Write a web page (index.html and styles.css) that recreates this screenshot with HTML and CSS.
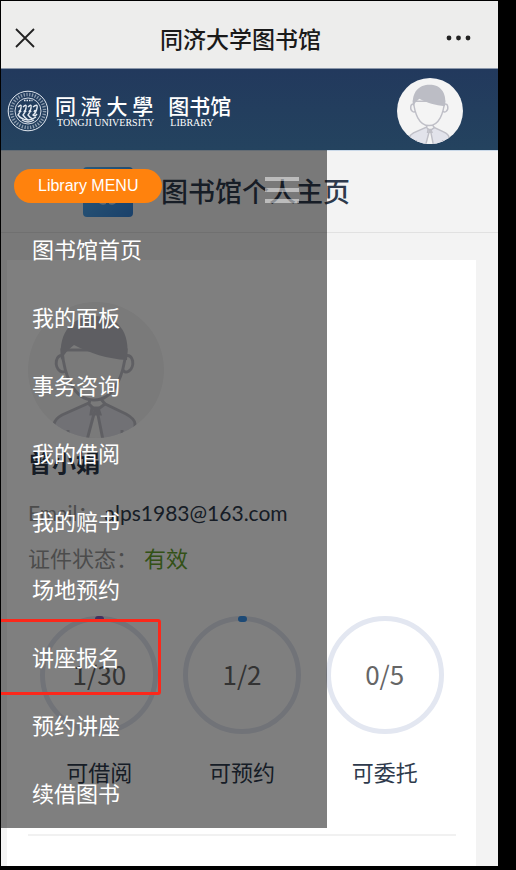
FILE: index.html
```html
<!DOCTYPE html>
<html lang="zh-CN">
<head>
<meta charset="utf-8">
<meta name="viewport" content="width=device-width, initial-scale=1">
<title>同济大学图书馆</title>
<link rel="stylesheet" href="styles.css">
</head>
<body>
<svg class="defs" aria-hidden="true">
  <symbol id="person" viewBox="0 0 136 136">
    <g fill="none" stroke="#bfbfc7" stroke-width="3">
      <path fill="#e2e3eb" d="M26 138V122Q27 117 34 113L61 101L68 106L75 101L98 112Q107 117 107 122V138Z"/>
      <path fill="#f4f4f4" d="M61 102L67 108L59 138H75L69 108L77 102L73 97H62Z"/>
      <path d="M64 106H70L72 112H63ZM40 128V138M94 128V138"/>
      <path d="M36 54C27 51 26 65 32 69C35 71 37 70 39 68M97 54C106 51 107 65 101 69C98 71 96 70 95 68"/>
      <path fill="#f4f4f4" d="M34 48C36 72 45 98 66 98C87 98 96 72 98 48Z"/>
    </g>
    <path fill="#bcbdc5" d="M33 58C30 28 46 14 67 14C89 14 103 29 99 58C79 57 62 51 46 43Q38 49 33 58Z"/>
  </symbol>
</svg>
<div class="screen">
  <header class="titlebar">
    <button class="icon-btn" aria-label="关闭">
      <svg width="20" height="20" viewBox="0 0 20 20"><path d="M1 1L19 19M19 1L1 19" fill="none" stroke="#222" stroke-width="1.8"/></svg>
    </button>
    <h1>同济大学图书馆</h1>
    <button class="icon-btn" aria-label="更多">
      <svg width="26" height="6" viewBox="0 0 26 6"><g fill="#222"><circle cx="3" cy="3" r="2.4"/><circle cx="12.500" cy="3" r="2.400"/><circle cx="22" cy="3" r="2.400"/></g></svg>
    </button>
  </header>

  <div class="brandbar">
    <a class="brand" href="#">
      <svg class="seal" viewBox="0 0 42 42" aria-hidden="true">
        <g fill="none" stroke="#e3e9f0">
          <circle cx="21" cy="21" r="19.800"/>
          <circle cx="21" cy="21" r="16.500" stroke-width="3.500" stroke-dasharray="1.300 1.500" opacity=".55"/>
          <circle cx="21" cy="21" r="13" stroke-width=".9"/>
          <path d="M17 10.500h1.500M19.500 10.500h1.500M22 10.500h1.500M24.500 10.500h1" stroke-width="1.500"/>
          <path stroke-width="1.400" d="M11 17q4-4 3 1t-3 7q2 3 5 4M16 17q4-4 3 1t-3 7q2 3 5 5M21 17q4-4 3 1t-3 7q2 3 5 4M26 17q5-4 4 1t-4 7q2 2 4-1M12 22q1-3 2 0M17 22q1-3 2 0M22 22q1-3 2 0M27 22q1-3 2 0M13 27q8 6 16 0M15 30q6 4 12 0"/>
        </g>
      </svg>
      <span class="brand-part"><span class="brand-cn">同 濟 大 學</span><span class="brand-en">TONGJI UNIVERSITY</span></span>
      <span class="brand-part"><span class="brand-cn">图书馆</span><span class="brand-en">LIBRARY</span></span>
    </a>
    <a class="account" href="#" aria-label="我的账户"><svg><use href="#person"/></svg></a>
  </div>

  <div class="body">
    <main>
      <div class="page-title">
        <svg class="tile" viewBox="0 0 50 50" aria-hidden="true">
          <defs><linearGradient id="blue" x2="1" y2="1"><stop stop-color="#58b4f2"/><stop offset="1" stop-color="#3482d6"/></linearGradient></defs>
          <rect width="50" height="50" rx="4" fill="url(#blue)"/>
          <path fill="#bfd8ed" d="M16 14h7v23q-4 2-7-1zM26 14h7v22q-3 3-7 1z"/>
        </svg>
        <h2>图书馆个人主页</h2>
      </div>
      <section class="card">
        <svg class="portrait"><use href="#person"/></svg>
        <h3>曾小娟</h3>
        <dl>
          <div class="row"><dt>Email：</dt><dd>alps1983@163.com</dd></div>
          <div class="row"><dt>证件状态：</dt><dd class="valid">有效</dd></div>
        </dl>
        <ul class="stats">
          <li><span class="ring purple">1/30</span><span class="label">可借阅</span></li>
          <li><span class="ring blue">1/2</span><span class="label">可预约</span></li>
          <li><span class="ring">0/5</span><span class="label">可委托</span></li>
        </ul>
        <hr>
      </section>
    </main>

    <nav class="menu">
      <div class="menu-head">
        <button class="menu-pill">Library MENU</button>
        <button class="burger" aria-label="收起菜单"><span></span><span></span><span></span></button>
      </div>
      <ul>
        <li><a href="#">图书馆首页</a></li>
        <li><a href="#">我的面板</a></li>
        <li><a href="#">事务咨询</a></li>
        <li><a href="#">我的借阅</a></li>
        <li><a href="#">我的赔书</a></li>
        <li><a href="#">场地预约</a></li>
        <li class="marked"><a href="#">讲座报名</a></li>
        <li><a href="#">预约讲座</a></li>
        <li><a href="#">续借图书</a></li>
      </ul>
    </nav>
  </div>
</div>
</body>
</html>
```
FILE: styles.css
```css
*,
*::before,
*::after {
  box-sizing: border-box;
}

body {
  display: flex;
  min-height: 100vh;
  margin: 0;
  padding: 1px 18px 4px 1px;
  background: #000;
  color: #2e3a4c;
  font-family: Lato, "Noto Sans CJK SC", sans-serif;
  font-size: 22px;
}

h1, h2, h3, ul, dl, dd, hr {
  margin: 0;
  padding: 0;
}

ul {
  list-style: none;
}

a {
  color: inherit;
  text-decoration: none;
}

button {
  padding: 0;
  border: 0;
  background: none;
}

svg {
  display: block;
}

.defs {
  position: absolute;
  width: 0;
  height: 0;
}

.screen {
  display: flex;
  flex: 1;
  flex-direction: column;
  background: #f3f3f3;
}

/* Title bar */
.titlebar {
  display: flex;
  align-items: center;
  justify-content: space-between;
  padding: 7px 26px 0 14px;
  height: 68px;
  background: #ededec;
  border-bottom: 1px solid #8b97aa;
}

.titlebar h1 {
  color: #1a1a1a;
  font-size: 23px;
  font-weight: 500;
}

/* Brand bar */
.brandbar {
  display: flex;
  align-items: center;
  justify-content: space-between;
  height: 81px;
  padding: 2px 35px 0 6px;
  background: linear-gradient(#22395d, #24435f);
}

.brand {
  display: flex;
  align-items: center;
  color: #fff;
}

.seal {
  width: 42px;
  height: 42px;
}

.brand-part {
  display: flex;
  flex-direction: column;
  margin-left: 6px;
}

.brand-part + .brand-part {
  margin-left: 14px;
}

.brand-cn {
  font-family: "Noto Sans CJK SC", sans-serif;
  font-size: 21px;
  font-weight: 500;
  line-height: 24px;
}

.brand-en {
  padding-left: 2px;
  font-family: "Liberation Serif", serif;
  font-size: 10px;
  line-height: 12px;
}

.account svg {
  width: 66px;
  height: 66px;
  border-radius: 50%;
  background: #f4f4f4;
}

/* Page body */
.body {
  position: relative;
  display: flex;
  flex: 1;
}

main {
  display: flex;
  flex: 1;
  flex-direction: column;
}

.page-title {
  display: flex;
  align-items: center;
  justify-content: center;
  gap: 28px;
  height: 83px;
  padding-right: 66px;
  border-top: 1px solid #c9d8e8;
  border-bottom: 1px solid #e1e1e1;
}

.page-title h2 {
  font-size: 27px;
  font-weight: 500;
  line-height: 32px;
}

.tile {
  width: 50px;
  height: 50px;
}

.card {
  flex: 1;
  margin: 27px 22px 0 6px;
  padding: 42px 20px 30px 21px;
  background: #fff;
}

.portrait {
  width: 136px;
  height: 136px;
  border-radius: 50%;
  background: #f4f4f4;
}

.card h3 {
  margin: 8px 0 10px;
  font-size: 24px;
  font-weight: 700;
  line-height: 34px;
}

.row {
  display: flex;
  line-height: 46px;
}

dt {
  color: #999;
}

.row:first-child {
  font-size: 21px;
}

dd {
  margin-left: 6px;
}

.valid {
  color: #66a22f;
}

.stats {
  display: grid;
  grid-template-columns: repeat(3, 1fr);
  margin-top: 34px;
}

.stats li {
  display: flex;
  flex-direction: column;
  align-items: center;
  gap: 23px;
}

.ring {
  position: relative;
  display: flex;
  align-items: center;
  justify-content: center;
  width: 118px;
  height: 118px;
  padding-bottom: 4px;
  border: 5px solid #e3e7f1;
  border-radius: 50%;
  color: #666;
  font-family: "Noto Sans CJK SC", sans-serif;
  font-size: 26px;
}

.ring.purple::before,
.ring.blue::before {
  content: "";
  position: absolute;
  top: -5px;
  left: 50%;
  width: 9px;
  height: 6px;
  margin-left: -4px;
  border-radius: 3px;
  background: #3a94ec;
}

.ring.purple::before {
  background: #8262bd;
}

.label {
  line-height: 32px;
}

hr {
  margin-top: 45px;
  border: 0;
  border-top: 2px solid #f1f1f1;
}

/* Slide-over menu */
.menu {
  position: absolute;
  top: 0;
  left: 0;
  width: 326px;
  max-width: 100%;
  background: rgba(0, 0, 0, 0.5);
  color: #fff;
}

.menu-head {
  display: flex;
  align-items: flex-start;
  justify-content: space-between;
  padding: 19px 28px 13px 13px;
}

.menu-pill {
  height: 34px;
  padding: 0 24px;
  border-radius: 17px;
  background: #ff820d;
  color: #fff;
  font-family: "Liberation Sans", sans-serif;
  font-size: 16px;
}

.burger {
  display: grid;
  gap: 7px;
  width: 34px;
  padding-top: 8px;
}

.burger span {
  height: 4px;
  background: rgba(255, 255, 255, 0.5);
}

.menu li {
  position: relative;
  padding-left: 31px;
  line-height: 68px;
}

.menu a {
  display: block;
}

.marked::after {
  content: "";
  position: absolute;
  top: -5px;
  left: -3px;
  width: 163px;
  height: 76px;
  border: 3px solid #fb281b;
  border-radius: 3px;
  clip-path: inset(0 0 0 3px);
  pointer-events: none;
}
```
